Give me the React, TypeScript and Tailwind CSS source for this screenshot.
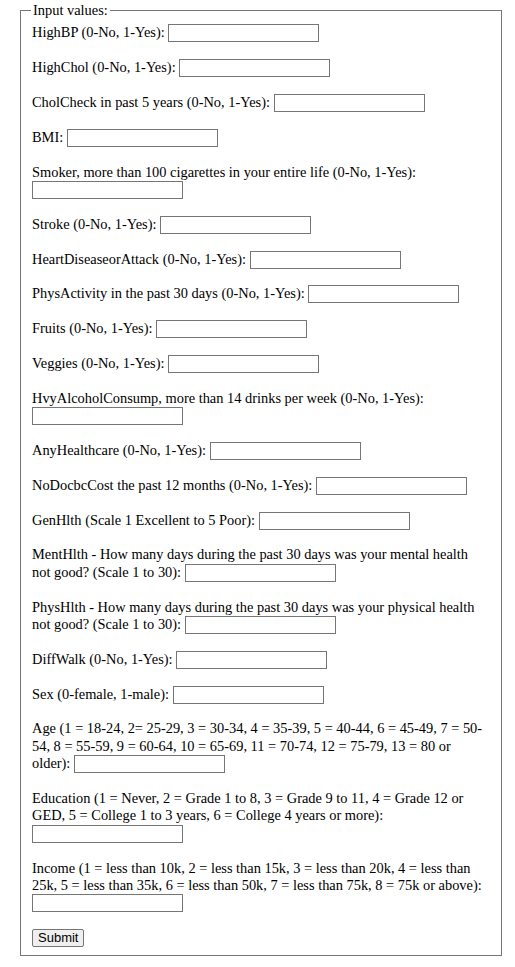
const fields: { label: string; name: string }[] = [
  { label: 'HighBP (0-No, 1-Yes):', name: 'HighBP' },
  { label: 'HighChol (0-No, 1-Yes):', name: 'HighChol' },
  { label: 'CholCheck in past 5 years (0-No, 1-Yes):', name: 'CholCheck' },
  { label: 'BMI:', name: 'BMI' },
  { label: 'Smoker, more than 100 cigarettes in your entire life (0-No, 1-Yes):', name: 'Smoker' },
  { label: 'Stroke (0-No, 1-Yes):', name: 'Stroke' },
  { label: 'HeartDiseaseorAttack (0-No, 1-Yes):', name: 'HeartDiseaseorAttack' },
  { label: 'PhysActivity in the past 30 days (0-No, 1-Yes):', name: 'PhysActivity' },
  { label: 'Fruits (0-No, 1-Yes):', name: 'Fruits' },
  { label: 'Veggies (0-No, 1-Yes):', name: 'Veggies' },
  { label: 'HvyAlcoholConsump, more than 14 drinks per week (0-No, 1-Yes):', name: 'HvyAlcoholConsump' },
  { label: 'AnyHealthcare (0-No, 1-Yes):', name: 'AnyHealthcare' },
  { label: 'NoDocbcCost the past 12 months (0-No, 1-Yes):', name: 'NoDocbcCost' },
  { label: 'GenHlth (Scale 1 Excellent to 5 Poor):', name: 'GenHlth' },
  { label: 'MentHlth - How many days during the past 30 days was your mental health not good? (Scale 1 to 30):', name: 'MentHlth' },
  { label: 'PhysHlth - How many days during the past 30 days was your physical health not good? (Scale 1 to 30):', name: 'PhysHlth' },
  { label: 'DiffWalk (0-No, 1-Yes):', name: 'DiffWalk' },
  { label: 'Sex (0-female, 1-male):', name: 'Sex' },
  { label: 'Age (1 = 18-24, 2= 25-29, 3 = 30-34, 4 = 35-39, 5 = 40-44, 6 = 45-49, 7 = 50-54, 8 = 55-59, 9 = 60-64, 10 = 65-69, 11 = 70-74, 12 = 75-79, 13 = 80 or older):', name: 'Age' },
  { label: 'Education (1 = Never, 2 = Grade 1 to 8, 3 = Grade 9 to 11, 4 = Grade 12 or GED, 5 = College 1 to 3 years, 6 = College 4 years or more):', name: 'Education' },
  { label: 'Income (1 = less than 10k, 2 = less than 15k, 3 = less than 20k, 4 = less than 25k, 5 = less than 35k, 6 = less than 50k, 7 = less than 75k, 8 = 75k or above):', name: 'Income' },
];

export default function App() {
  return (
    <div className="min-h-screen bg-white pl-[20px] pr-[13px] pt-[2px] font-['Liberation_Serif','Times_New_Roman',serif] text-[14.4px] leading-[17.4px] text-black">
      <form onSubmit={(e) => e.preventDefault()}>
        <fieldset className="border border-[#767676] px-[11px] pt-[5px] pb-[8px]">
          <legend className="ml-[-1px] px-[2px]">Input values:</legend>
          {fields.map((f) => (
            <div key={f.name} className="mb-[17.4px]">
              <label htmlFor={f.name}>{f.label}</label>{' '}
              <input
                id={f.name}
                name={f.name}
                type="text"
                className="-mb-[1px] inline-block h-[18px] w-[151px] border border-[#767676] bg-white px-[2px] align-top text-[13px] leading-[14px]"
              />
            </div>
          ))}
          <button
            type="submit"
            className="h-[18px] rounded-[2px] border border-[#767676] bg-[#efefef] px-[5px] align-top font-['Liberation_Sans',Arial,sans-serif] text-[13px] leading-[14px]"
          >
            Submit
          </button>
        </fieldset>
      </form>
    </div>
  );
}
